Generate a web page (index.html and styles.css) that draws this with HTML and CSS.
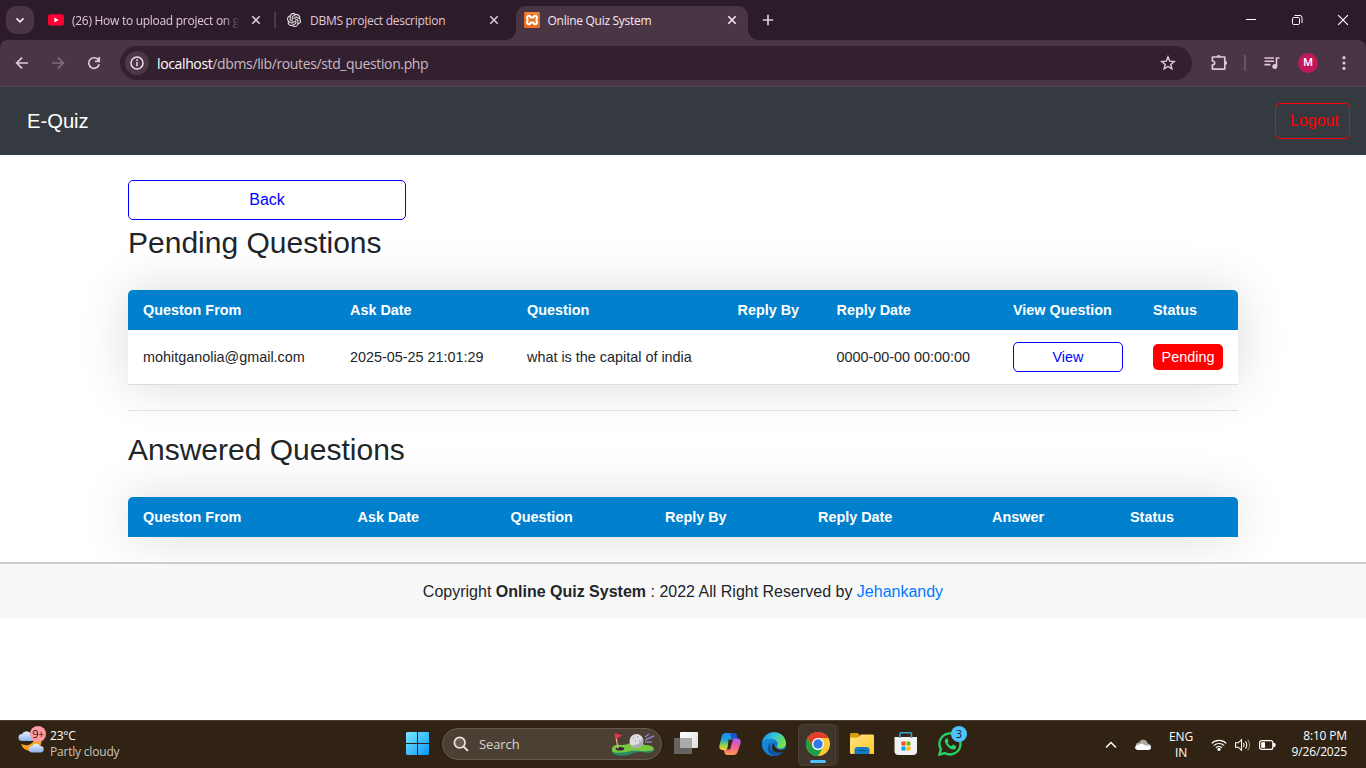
FILE: index.html
```html
<!DOCTYPE html>
<html lang="en">
<head>
<meta charset="utf-8">
<title>Online Quiz System</title>
<link rel="stylesheet" href="styles.css">
</head>
<body>
<div class="screen">
  <div class="tabstrip">
    <div class="tab-menu"><svg width="28" height="28" viewBox="0 0 28 28"><path d="M10.500 12.300l3.500 3.500 3.500-3.500" fill="none" stroke="#f3e6ee" stroke-width="1.800"/></svg></div>
    <div class="tab tab-first">
      <svg class="fav" width="16" height="16" viewBox="0 0 16 16"><rect y="2.200" width="16" height="11.400" rx="2.600" fill="#ff0033"/><path d="M6.400 5.500v4.800L10.600 7.900z" fill="#fff"/></svg>
      <span class="tab-title fade">(26) How to upload project on g</span>
      <svg class="x" width="16" height="16" viewBox="0 0 16 16"><path d="M4.300 4.300l7.400 7.400M11.700 4.300l-7.400 7.400" stroke="#e0c8d6" stroke-width="1.600"/></svg>
    </div>
    <div class="tab-sep"></div>
    <div class="tab tab-second">
      <svg class="fav" width="14" height="14" viewBox="0 0 24 24"><path fill="#efe8ec" stroke="#efe8ec" stroke-width=".3" d="M22.282 9.821a5.985 5.985 0 0 0-.516-4.910 6.046 6.046 0 0 0-6.510-2.900A6.065 6.065 0 0 0 4.981 4.182a5.985 5.985 0 0 0-3.998 2.900 6.046 6.046 0 0 0 .743 7.097 5.980 5.980 0 0 0 .511 4.911 6.051 6.051 0 0 0 6.515 2.900A5.985 5.985 0 0 0 13.260 24a6.056 6.056 0 0 0 5.772-4.206 5.990 5.990 0 0 0 3.998-2.900 6.056 6.056 0 0 0-.748-7.073zM13.260 22.430a4.476 4.476 0 0 1-2.876-1.041l.142-.080 4.778-2.759a.795.795 0 0 0 .393-.681v-6.737l2.020 1.169a.071.071 0 0 1 .038.052v5.583a4.504 4.504 0 0 1-4.495 4.494zM3.600 18.304a4.471 4.471 0 0 1-.535-3.014l.142.085 4.783 2.759a.771.771 0 0 0 .781 0l5.843-3.369v2.332a.080.080 0 0 1-.033.062L9.740 19.950a4.500 4.500 0 0 1-6.140-1.646zM2.341 7.896a4.485 4.485 0 0 1 2.366-1.973V11.600a.766.766 0 0 0 .388.677l5.815 3.354-2.020 1.169a.076.076 0 0 1-.071 0l-4.830-2.787A4.504 4.504 0 0 1 2.341 7.872zm16.596 3.856l-5.833-3.388 2.015-1.164a.076.076 0 0 1 .071 0l4.830 2.791a4.494 4.494 0 0 1-.676 8.105v-5.678a.790.790 0 0 0-.407-.666zm2.011-3.023l-.142-.085-4.774-2.782a.776.776 0 0 0-.785 0L9.409 9.230V6.897a.066.066 0 0 1 .028-.061l4.830-2.787a4.499 4.499 0 0 1 6.680 4.660zM8.307 12.863l-2.020-1.164a.080.080 0 0 1-.038-.057V6.075a4.499 4.499 0 0 1 7.376-3.454l-.142.081-4.778 2.758a.795.795 0 0 0-.393.682zm1.097-2.365l2.602-1.500 2.607 1.500v2.999l-2.598 1.500-2.607-1.500z"/></svg>
      <span class="tab-title">DBMS project description</span>
      <svg class="x" width="16" height="16" viewBox="0 0 16 16"><path d="M4.300 4.300l7.400 7.400M11.700 4.300l-7.400 7.400" stroke="#e0c8d6" stroke-width="1.600"/></svg>
    </div>
    <div class="tab tab-active">
      <svg class="fav" width="16" height="16" viewBox="0 0 16 16"><rect width="16" height="16" rx="1" fill="#e9701f"/><path d="M1 1.200h14" stroke="#ffb27a" stroke-width=".8"/><path d="M3.700 8Q2 3.700 4.800 3.700q1.700 0 1.700 1.700h3q0-1.700 1.700-1.700Q14 3.700 12.300 8 14 12.300 11.200 12.300q-1.700 0-1.700-1.700h-3q0 1.700-1.700 1.700Q2 12.300 3.700 8z" fill="none" stroke="#fff" stroke-width="2" stroke-linejoin="round"/></svg>
      <span class="tab-title">Online Quiz System</span>
      <svg class="x" width="16" height="16" viewBox="0 0 16 16"><path d="M4.300 4.300l7.400 7.400M11.700 4.300l-7.400 7.400" stroke="#f6e8f0" stroke-width="1.600"/></svg>
    </div>
    <svg class="newtab" width="16" height="16" viewBox="0 0 16 16"><path d="M8 2.800v10.400M2.800 8h10.400" stroke="#e0c8d6" stroke-width="1.700"/></svg>
    <div class="winbtns">
      <svg width="46" height="40" viewBox="0 0 46 40"><path d="M18 19.500h10" stroke="#fff"/></svg>
      <svg width="46" height="40" viewBox="0 0 46 40"><g fill="none" stroke="#fff"><rect x="18.500" y="17.500" width="7" height="7" rx="1.200"/><path d="M20.500 15.500h5.500a2 2 0 0 1 2 2v5.500"/></g></svg>
      <svg width="46" height="40" viewBox="0 0 46 40"><path d="M18.200 15.200l9.700 9.700M27.900 15.200l-9.700 9.700" stroke="#fff" stroke-width="1.200"/></svg>
    </div>
  </div>

  <div class="toolbar-back"><div class="toolbar">
    <svg class="nav" width="36" height="36" viewBox="0 0 36 36"><path d="M24 18H13M18 12.600L12.700 18l5.300 5.400" fill="none" stroke="#e2c6d6" stroke-width="1.700"/></svg>
    <svg class="nav" width="36" height="36" viewBox="0 0 36 36"><path d="M12 18h11M18 12.600l5.300 5.400-5.300 5.400" fill="none" stroke="#84697a" stroke-width="1.700"/></svg>
    <svg class="nav" width="36" height="36" viewBox="0 0 36 36"><path d="M22.500 15.200A5.300 5.300 0 1 0 23.200 19.200M23.200 12v4.300h-4.300" fill="none" stroke="#e2c6d6" stroke-width="1.700"/></svg>
    <div class="urlbar">
      <svg width="24" height="24" viewBox="0 0 24 24"><circle cx="12" cy="12" r="12" fill="#4c3747"/><circle cx="12" cy="12" r="6" fill="none" stroke="#eddbe5" stroke-width="1.500"/><path d="M12 11v4.200M12 8.200v1.700" stroke="#eddbe5" stroke-width="1.500"/></svg>
      <span class="url"><b>localhost</b>/dbms/lib/routes/std_question.php</span>
      <svg class="star" width="16" height="16" viewBox="0 0 16 16"><path d="M8 1.900l1.700 4.200 4.500.35-3.400 2.950 1.050 4.400L8 11.450 4.150 13.800l1.050-4.400L1.800 6.450l4.500-.35z" fill="none" stroke="#e2ccd8" stroke-width="1.400"/></svg>
    </div>
    <svg class="ext" width="20" height="20" viewBox="0 0 20 20"><path d="M3.400 4h12.400v12.100H3.400v-4.300q2.300-.2 2.300-1.900T3.400 8z" fill="none" stroke="#e2c6d6" stroke-width="1.700" stroke-linejoin="round"/><path d="M7.600 4a2.100 2.100 0 0 1 4.200 0zM16 7.800a2.100 2.100 0 0 1 0 4.200z" fill="#e2c6d6"/></svg>
    <div class="tool-sep"></div>
    <svg class="music" width="18" height="18" viewBox="0 0 18 18"><g fill="none" stroke="#e2c6d6" stroke-width="1.600"><path d="M1.500 4h9.500M1.500 7.300h9.500M1.500 10.600h6M16.500 4h-3v8"/></g><circle cx="11.800" cy="12.400" r="2.500" fill="#e2c6d6"/></svg>
    <div class="avatar">M</div>
    <svg class="dots" width="6" height="18" viewBox="0 0 6 18" fill="#e2c6d6"><circle cx="3" cy="3.700" r="1.600"/><circle cx="3" cy="9" r="1.600"/><circle cx="3" cy="14.300" r="1.600"/></svg>
  </div></div>

  <div class="page">
    <header class="navbar">
      <a class="brand">E-Quiz</a>
      <a class="logout">Logout</a>
    </header>
    <main class="container">
      <a class="back">Back</a>
      <h2>Pending Questions</h2>
      <table class="content-table">
        <colgroup><col class="p1"><col class="p2"><col class="p3"><col class="p4"><col class="p5"><col class="p6"><col class="p7"></colgroup>
        <thead><tr><th>Queston From</th><th>Ask Date</th><th>Question</th><th>Reply By</th><th>Reply Date</th><th>View Question</th><th>Status</th></tr></thead>
        <tbody><tr><td>mohitganolia@gmail.com</td><td>2025-05-25 21:01:29</td><td>what is the capital of india</td><td></td><td>0000-00-00 00:00:00</td><td><a class="view">View</a></td><td><span class="pending">Pending</span></td></tr></tbody>
      </table>
      <hr>
      <h2>Answered Questions</h2>
      <table class="content-table">
        <colgroup><col class="a1"><col class="a2"><col class="a3"><col class="a4"><col class="a5"><col class="a6"><col class="a7"></colgroup>
        <thead><tr><th>Queston From</th><th>Ask Date</th><th>Question</th><th>Reply By</th><th>Reply Date</th><th>Answer</th><th>Status</th></tr></thead>
      </table>
    </main>
    <footer class="footer">Copyright <b>Online Quiz System</b> : 2022 All Right Reserved by <a>Jehankandy</a></footer>
  </div>

  <div class="taskbar">
    <div class="weather">
      <div class="weather-icon">
        <svg width="28" height="32" viewBox="0 0 28 32"><defs><linearGradient id="cl" x2="0" y2="1"><stop stop-color="#e8f1ff"/><stop offset="1" stop-color="#8fb2ea"/></linearGradient></defs><path d="M15 11q7-2 8.500 5 0 11-11 11-7 0-9.500-7 8 3 12-2 1.500-3 0-7z" fill="#f6a01f"/><path d="M4 17a3.500 3.500 0 0 1 0-7 5 5 0 0 1 9 0 3.500 3.500 0 0 1 0 7z" fill="url(#cl)"/><path d="M14 28.500a3.200 3.200 0 0 1 0-6.400 4.600 4.600 0 0 1 8.300-.2 3.300 3.300 0 0 1 .2 6.600z" fill="url(#cl)"/></svg>
        <span class="count count-pink">9+</span>
      </div>
      <div class="weather-text"><span>23°C</span><span class="dim">Partly cloudy</span></div>
    </div>
    <div class="apps">
      <div class="app app-start"><svg width="24" height="24" viewBox="0 0 24 24"><defs><linearGradient id="w" x2="1" y2="1"><stop stop-color="#7be8ff"/><stop offset="1" stop-color="#0797f8"/></linearGradient></defs><path d="M1 0h10v11H0V1zM12 0h10.500l.5 1v10H12zM0 12h11v11H1l-1-1zM12 12h11v10l-1 1H12z" fill="url(#w)"/></svg></div>
      <div class="search">
        <svg width="16" height="16" viewBox="0 0 16 16"><circle cx="6.700" cy="6.700" r="5.300" fill="#685c50" stroke="#e8e4e0" stroke-width="1.700"/><path d="M10.600 10.600l4.300 4.300" stroke="#e8e4e0" stroke-width="2"/></svg>
        <span class="search-text">Search</span>
        <svg class="golf" width="44" height="24" viewBox="0 0 44 24"><path d="M1 16Q2 12 11 13q4 0 7-2 10-1 16 2 8 0 9 4-1 4-12 2-9 0-13 3-13 2-16-2-2-2-1-4z" fill="#268b65"/><path d="M1 15Q3 11 11 12q5 0 8-2 9-1 15 2 8 0 9 4-2 3-13 2-10-1-14 1-13 2-15-1z" fill="#78c83f"/><ellipse cx="9" cy="15.700" rx="4.300" ry="1.800" fill="#382041"/><path d="M4.500 1L7 15.500" stroke="#f3b08b" stroke-width="1.300"/><path d="M3.500 0l8 2.500L4.500 6z" fill="#ef3340"/><circle cx="25.500" cy="8" r="7" fill="#dedce2"/><path d="M20 12q6 2 10-4l1-3q3 9-5 10-4 0-6-3" fill="#aaa8b5"/><path d="M22 5h1M26 4h1M24 8h1M28 8h1M25 12h1" stroke="#888592"/><path d="M34 4l4-3M34 7l9-4M34 9l7 0" stroke="#8981c9" stroke-width="1.500"/></svg>
      </div>
      <div class="app"><svg width="24" height="24" viewBox="0 0 24 24"><defs><linearGradient id="tv" x2="1" y2="1"><stop stop-color="#fff"/><stop offset="1" stop-color="#ddd"/></linearGradient></defs><rect x="6" y="0" width="18" height="16" rx="1" fill="url(#tv)"/><rect x="0" y="6" width="18" height="16" rx="1" fill="#6c6c6c" opacity=".9"/><path d="M6 6h12v10H6z" fill="#aaa"/></svg></div>
      <div class="app"><svg width="24" height="24" viewBox="0 0 24 24"><defs><linearGradient id="c1" x2="0" y2="1"><stop stop-color="#168cff"/><stop offset=".4" stop-color="#1ca6d8"/><stop offset=".7" stop-color="#8fd04c"/><stop offset="1" stop-color="#ffd02d"/></linearGradient><linearGradient id="c2" x2="0" y2="1"><stop stop-color="#a85cf2"/><stop offset=".5" stop-color="#f35f96"/><stop offset="1" stop-color="#ff9b47"/></linearGradient></defs><path d="M7.500 1H16q1.800 0 2.400 2l1 3.500h-3.600q-1.800 0-2.400 2L11 16q-.7 2-2.700 2H4q-3.500-.5-2.500-5l2.300-9Q4.700 1 7.500 1z" fill="url(#c1)"/><path d="M12 1h4q1.800 0 2.400 2l1 3.500h-3.600q-1.400 0-2.100 1.200z" fill="#1957c9"/><path d="M15.500 23H9q-1.800 0-2.400-2l-1-3h2.700q2 0 2.700-2l2.500-7.500q.6-2 2.400-2H20q3.500.5 2.500 5l-2.900 8.500q-1 3-4.100 3z" fill="url(#c2)"/><path d="M10.500 7.500h4.500L12 17.500H8q1.200-.5 1.700-2.500z" fill="#33291d"/></svg></div>
      <div class="app"><svg width="24" height="24" viewBox="0 0 24 24"><defs><linearGradient id="e1" x2="1" y2=".4"><stop stop-color="#1687d8"/><stop offset=".5" stop-color="#32c4dd"/><stop offset="1" stop-color="#70e34d"/></linearGradient></defs><circle cx="12" cy="12" r="12" fill="#1372c9"/><path d="M0 11C2-4 24-3 24 12c0 5-8 6-9 3-.5-1 1-1.500.5-4C14 6 4 5 0 11z" fill="url(#e1)"/><path d="M0 11c4-6 12-4 14-1-8-1-9 9 0 14C6 25 0 19 0 11z" fill="#1686d9"/><path d="M8 13c0 7 8 9 13.500 6-4 6-12 6-15 1Q4 14 9 10q-1 1-1 3z" fill="#15539d"/><path d="M13 11q-2 1 0 4 2.500 4 9 2.500 2.500 0 2-.5-1 3-3 3-11 2-11-5 0-3 3-4z" fill="#302314"/></svg></div>
      <div class="app app-open"><svg width="24" height="24" viewBox="0 0 24 24"><circle cx="12" cy="12" r="12" fill="#fcc934"/><path d="M1.600 6A12 12 0 0 1 22.400 6H12a6 6 0 0 0-5.200 9z" fill="#e33b2e"/><path d="M1.600 6A12 12 0 0 0 12 24l5.200-9a6 6 0 0 1-10.400 0z" fill="#1e9d4b"/><circle cx="12" cy="12" r="5.900" fill="#fff"/><circle cx="12" cy="12" r="4.700" fill="#2f79ee"/></svg><span class="underline"></span></div>
      <div class="app"><svg width="24" height="24" viewBox="0 0 24 24"><defs><linearGradient id="f" x2="1" y2="1"><stop stop-color="#ffe484"/><stop offset="1" stop-color="#ffc928"/></linearGradient></defs><path d="M1 1h7l2 3v5H0V2z" fill="#d99b08"/><path d="M0 5.500h8l3-3h12l1 1V22H1l-1-1z" fill="url(#f)"/><path d="M4.500 22v-4q0-3 3-3h9q3 0 3 3v4z" fill="#117cc3"/><path d="M8 18.500h8" stroke="#07558b"/></svg></div>
      <div class="app"><svg width="24" height="24" viewBox="0 0 24 24"><path d="M0.500 5h22.500v14q0 4-4 4h-14.500q-4 0-4-4z" fill="#f1f1f1"/><path d="M6 6V1.700Q6 .8 7 .8h9.500q1 0 1 .9V6" fill="none" stroke="#32a5df" stroke-width="1.500"/><path d="M7.500 9.500h4v4h-4z" fill="#f04a21"/><path d="M12.500 9.500h4v4h-4z" fill="#78b900"/><path d="M7.500 14.500h4v4h-4z" fill="#00a3ee"/><path d="M12.500 14.500h4v4h-4z" fill="#ffb900"/></svg></div>
      <div class="app"><svg width="24" height="24" viewBox="0 0 24 24"><path d="M1.400 22.600l1.500-5.400a10.500 10.500 0 1 1 4 3.900z" fill="none" stroke="#25d366" stroke-width="2.300"/><path d="M8.300 6.300q-3 2 0 6.500 3.500 5 7.700 4.700 3-1 2-3.500l-3-1.500-1.600 1.800q-2.500-.8-3.800-3.500l1-1.300-1-3z" fill="#25d366"/></svg><span class="count count-blue">3</span></div>
    </div>
    <div class="tray">
      <svg class="chev" width="12" height="8" viewBox="0 0 12 8"><path d="M1 6.500l5-5 5 5" fill="none" stroke="#fff" stroke-width="1.500"/></svg>
      <svg class="cloud" width="16" height="12" viewBox="0 0 16 12"><path d="M1 8Q0 4 4 3.500q2-4 6-2.500 2.500 1 2.800 3.500Q16 5 16 8L8 9z" fill="#aaa6a1"/><path d="M3 11q-3-.5-3-3 1-2 4-2.500l3-1 4 2.300q5-1.500 5 1.700 0 2.500-3 2.500z" fill="#fff"/></svg>
      <div class="lang"><span>ENG</span><span>IN</span></div>
      <svg class="wifi" width="16" height="14" viewBox="0 0 16 14"><g fill="none" stroke="#fff" stroke-width="1.200"><path d="M.7 5.400a10.300 10.300 0 0 1 14.600 0M2.800 7.700a7.300 7.300 0 0 1 10.400 0M4.900 9.900a4.400 4.400 0 0 1 6.200 0"/></g><circle cx="8" cy="11.300" r="1.600" fill="#fff"/></svg>
      <svg class="sound" width="16" height="14" viewBox="0 0 16 14"><g fill="none" stroke="#fff" stroke-width="1.100"><path d="M.6 4.800h2.700L6.500 1.700v10.600L3.300 9.200H.6zM8.500 5q1.300 2 0 4M10.500 3.200q2.500 3.800 0 7.600"/><path d="M12.700 1.500q3.700 5.500 0 11" stroke="#8b8177"/></g></svg>
      <svg class="battery" width="17" height="10" viewBox="0 0 17 10"><rect x=".6" y=".6" width="13.200" height="8.800" rx="2" fill="none" stroke="#fff" stroke-width="1.200"/><rect x="2.200" y="2.200" width="3.800" height="5.600" fill="#fff"/><path d="M14 3h1.200q1.300 0 1.300 1.300v1.400Q16.500 7 15.200 7H14z" fill="#fff"/></svg>
      <div class="clock"><span>8:10 PM</span><span>9/26/2025</span></div>
    </div>
  </div>
</div>
</body>
</html>
```
FILE: styles.css
```css
* { box-sizing: border-box; }
body { margin: 0; background: #fff; overflow: hidden; }
svg { display: block; flex: none; }
.screen { width: 1366px; height: 768px; display: flex; flex-direction: column; font-family: "Open Sans", "Noto Sans", sans-serif; overflow: hidden; }

.tabstrip { height: 40px; flex: none; background: #2c1b29; display: flex; padding-left: 6px; }
.tab-menu { width: 28px; height: 28px; margin-top: 6px; border-radius: 10px; background: #4a3545; }
.tab { display: flex; align-items: center; height: 40px; padding-left: 8px; font-size: 12px; color: #e0c8d6; }
.tab-first { width: 232px; margin-left: 6px; }
.tab-second { width: 231px; margin-left: 3px; }
.tab-title { margin-left: 8px; flex: 1; min-width: 0; white-space: nowrap; letter-spacing: -0.28px; }
.tab-second .tab-title { margin-left: 9px; }
.tab .x { margin-right: 8px; }
.fade { -webkit-mask-image: linear-gradient(90deg, #000 150px, transparent 168px); mask-image: linear-gradient(90deg, #000 150px, transparent 168px); margin-right: 8px; }
.tab-sep { width: 2px; height: 16px; margin: 12px 0 0 2px; background: #4b3848; }
.tab-active { width: 232px; height: 34px; margin: 6px 0 0 6px; padding-bottom: 6px; background: #4a3545; color: #f6e8f0; border-radius: 10px 10px 0 0; position: relative; }
.tab-active .tab-title { margin-left: 7.5px; }
.tab-active::before, .tab-active::after { content: ""; position: absolute; bottom: 0; width: 10px; height: 10px; }
.tab-active::before { left: -10px; background: radial-gradient(circle at 0 0, transparent 9.5px, #4a3545 10px); }
.tab-active::after { right: -10px; background: radial-gradient(circle at 100% 0, transparent 9.5px, #4a3545 10px); }
.newtab { margin: 12px 0 0 12px; }
.winbtns { display: flex; margin-left: auto; }

.toolbar-back { background: #2c1b29; height: 47px; flex: none; }
.toolbar { height: 47px; background: #4a3545; border-radius: 8px 8px 0 0; border-bottom: 1px solid #55464f; display: flex; align-items: center; padding-left: 4px; }
.urlbar { width: 1072px; height: 34px; margin-left: 8px; border-radius: 17px; background: #33202f; display: flex; align-items: center; padding: 0 16px 0 5px; }
.url { margin-left: 8px; font-size: 14px; color: #c9b9c3; letter-spacing: -0.37px; flex: 1; }
.url b { font-weight: 400; color: #fff; }
.ext { margin-left: 17px; }
.tool-sep { width: 2px; height: 16px; margin-left: 15px; background: #6a5264; }
.music { margin-left: 17px; }
.avatar { width: 20px; height: 20px; margin-left: 17px; border-radius: 50%; background: #c2185b; color: #fff; font: 500 11px/20px Roboto, sans-serif; text-align: center; }
.dots { margin-left: 23px; }

.page { height: 633px; flex: none; background: #fff; font-family: "Liberation Sans", Arial, sans-serif; font-size: 16px; line-height: 24px; color: #212529; overflow: hidden; }
.navbar { height: 68px; background: #343a40; display: flex; align-items: center; justify-content: space-between; padding: 0 16px 0 27px; }
.brand { font-size: 20.2px; color: #fff; }
.logout { width: 75px; height: 36px; border: 1px solid #f00; border-radius: 5px; color: #f00; padding-left: 14px; line-height: 33px; }
.container { width: 1110px; margin: 0 auto; padding-top: 25px; }
.back { display: block; width: 278px; height: 40px; border: 1px solid #00f; border-radius: 5px; color: #00f; text-align: center; line-height: 37px; }
h2 { margin: 5px 0 0; font-size: 30px; line-height: 36px; font-weight: 400; }
.content-table { width: 1110px; margin-top: 29px; table-layout: fixed; border-collapse: separate; border-spacing: 0; font-size: 14.4px; line-height: 20px; border-radius: 5px 5px 0 0; overflow: hidden; box-shadow: 0 0 50px rgba(0, 0, 0, .15); background: #fff; }
.content-table th { height: 40px; padding: 0 15px; background: #0080cd; color: #fff; text-align: left; white-space: nowrap; }
.content-table td { height: 55px; padding: 0 15px; white-space: nowrap; border-bottom: 1px solid #ddd; }
.p1 { width: 207px; } .p2 { width: 177px; } .p3 { width: 210.5px; } .p4 { width: 99px; } .p5 { width: 176.5px; } .p6 { width: 140px; } .p7 { width: 100px; }
.a1 { width: 214.5px; } .a2 { width: 153px; } .a3 { width: 154.5px; } .a4 { width: 153px; } .a5 { width: 174px; } .a6 { width: 138px; } .a7 { width: 123px; }
.view { display: block; height: 30px; border: 1px solid #00f; border-radius: 5px; color: #00f; text-align: center; line-height: 28px; }
.pending { display: block; width: 70px; height: 26px; border-radius: 5px; background: #f00; color: #fff; text-align: center; line-height: 26px; }
hr { margin: 25px 0 0; border: 0; border-top: 1px solid #e0e0e0; }
hr + h2 { margin-top: 21px; }
.footer { margin-top: 25px; height: 57px; border-top: 2px solid #ccc; background: #f8f8f8; text-align: center; line-height: 55px; position: relative; }
.footer a { color: #007bff; }

.taskbar { height: 48px; flex: none; background: #302314; border-top: 1px solid #4a3f32; display: grid; grid-template-columns: 395px 577px 1fr; color: #fff; font-size: 12px; line-height: 16px; }
.weather { display: flex; padding: 5px 0 0 18px; }
.weather-icon { position: relative; width: 28px; }
.weather-icon svg { margin-top: -2px; }
.weather-text { display: flex; flex-direction: column; margin: 2px 0 0 4px; letter-spacing: -0.2px; }
.dim { color: #c9c4be; }
.count { position: absolute; width: 16px; height: 16px; border-radius: 50%; text-align: center; color: #151515; font-size: 11px; line-height: 16px; }
.count-pink { background: #ff99a4; right: 0; top: 0; letter-spacing: -0.5px; }
.apps { display: flex; align-items: center; padding-bottom: 1px; }
.app { width: 44px; height: 40px; display: flex; align-items: center; justify-content: center; position: relative; }
.app-start { padding-left: 1px; }
.search { width: 220px; height: 32px; margin: 0 2px 0 3px; border: 1px solid #675b4e; border-radius: 16px; background: #4c4034; display: flex; align-items: center; padding: 0 6px 0 10px; }
.search-text { margin-left: 10px; font-size: 13px; color: #d9d4cf; flex: 1; letter-spacing: -0.1px; }
.golf { margin-top: 1px; }
.app-open::before { content: ""; position: absolute; left: 2px; top: 0; width: 36px; height: 40px; border: 1px solid #4d4133; border-radius: 5px; background: #40352a; box-shadow: 3px 0 0 #3b3023; }
.app-open svg { position: relative; }
.underline { position: absolute; bottom: 1px; left: 14px; width: 16px; height: 3px; border-radius: 2px; background: #4cc2ff; }
.count-blue { background: #4cc2ff; right: 5px; top: 2px; }
.tray { display: flex; align-items: center; padding-right: 19px; letter-spacing: -0.15px; }
.chev { margin-left: 133px; }
.cloud { margin-left: 18px; }
.lang { display: flex; flex-direction: column; align-items: center; width: 30px; margin-left: 15px; }
.wifi { margin-left: 15px; }
.sound { margin-left: 8px; }
.battery { margin-left: 8px; }
.clock { display: flex; flex-direction: column; align-items: flex-end; margin: -2px 0 0 auto; }
```
